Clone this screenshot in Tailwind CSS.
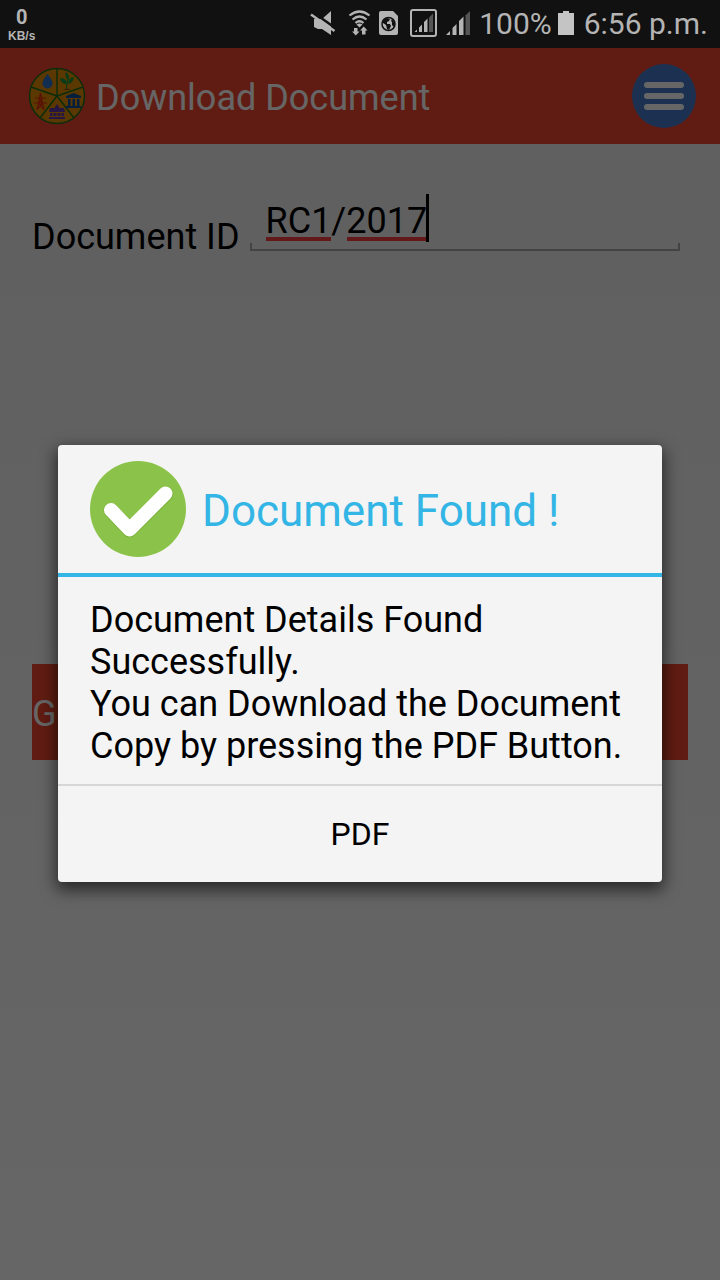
<!DOCTYPE html>
<html lang="en">
<head>
  <meta charset="UTF-8" />
  <meta name="viewport" content="width=device-width, initial-scale=1" />
  <title>Download Document</title>
  <script src="https://cdn.jsdelivr.net/npm/@tailwindcss/browser@4"></script>
</head>
<body class="min-h-screen flex flex-col font-['Roboto',sans-serif] bg-white">

  <!-- Status bar -->
  <div class="h-12 shrink-0 bg-[#111111] text-[#b4b4b4] flex items-center justify-between pl-2 pr-3">
    <div class="flex flex-col items-center font-['Liberation_Sans',sans-serif]">
      <span class="text-xl leading-6 font-['Roboto',sans-serif] font-bold">0</span>
      <span class="text-xs leading-3.5 font-bold">KB/s</span>
    </div>
    <div class="flex items-center">
      <svg class="w-[162px] h-12" viewBox="308 0 162 48" fill="#b4b4b4">
        <!-- muted speaker -->
        <path d="M313 19h8l9-8v24l-9-6h-4l-4-2z" />
        <path d="M311 11.500l24 17" stroke="#111111" stroke-width="2.500" />
        <path d="M310 14.500l23.500 16.500" stroke="#b4b4b4" stroke-width="2.500" />
        <!-- wifi -->
        <g fill="none" stroke="#b4b4b4" stroke-width="2.200">
          <path d="M348.500 15.500q10-8 20 0" />
          <path d="M351.500 19.500q7-6 14 0" />
          <path d="M354.500 23q4-3.500 8 0" />
        </g>
        <path d="M355.500 24.500q3-2 6 0l-3 3z" />
        <path d="M353 28h3.500v3.500h2l-3.700 4-3.800-4h2zM361 34.500h3.500v-4h2l-3.700-4-3.800 4h2z" />
        <!-- sim with globe -->
        <path d="M380 11h12l5 5v17q0 2-2 2h-15q-2 0-2-2v-20q0-2 2-2z" />
        <circle cx="387.500" cy="24" r="6.500" fill="none" stroke="#111111" stroke-width="1.500" />
        <path d="M382 20l4-2 3 1-1 2-2 1v2h3l1 2-2 4-2-1-1-4-3-2zM391 19l3 4-1 4-2-2v-3l-1-1z" fill="#111111" />
        <!-- boxed signal -->
        <rect x="410" y="10" width="25" height="26" rx="2" fill="none" stroke="#b4b4b4" stroke-width="2" />
        <path d="M413.500 32l2.500-2.500v2.500zM418 27.500l3-3v7.500h-3zM423 22l3.500-3.500v13.500h-3.500z" />
        <path d="M428 17.500l4-4v18.500h-4z" fill="#555555" />
        <!-- signal -->
        <path d="M445 35l4-4v4zM451.500 28l4-4v11h-4zM458 21l4.500-4.500v18.500h-4.500z" />
        <path d="M464.500 15.500l4.500-4.500v24h-4.500z" fill="#555555" />
      </svg>
      <span class="text-[30px] leading-8 ml-2">100%</span>
      <svg class="w-4 h-6 ml-1.5 -mt-0.5" viewBox="0 0 16 24" fill="#c4c4c4">
        <path d="M5 0h6v2h5v22H0V2h5z" />
      </svg>
      <span class="text-[30px] leading-8 ml-2.5">6:56 p.m.</span>
    </div>
  </div>

  <div class="relative grow flex flex-col bg-linear-to-b from-[#eeeeee] to-white">

    <!-- App bar -->
    <header class="h-24 bg-[#f0482d] flex items-center px-6">
      <svg class="w-16 h-16 shrink-0" viewBox="24 64 64 64">
        <circle cx="57" cy="96" r="27.500" fill="#e08c00" stroke="#1f6f1f" stroke-width="1.500" />
        <path d="M57 96V68.500M57 96l26-9M57 96l17 22M57 96l-17 22M57 96l-26-9" stroke="#1f6f1f" stroke-width="1.500" />
        <path d="M47.500 74q-5 6-5 9.500a5 5 0 0 0 10 0q0-3.500-5-9.500z" fill="#2b72c8" />
        <path d="M66.500 89q0-6 1.500-10" fill="none" stroke="#16933c" stroke-width="1.200" />
        <path d="M60 78q7 0 7 6-6 0-7-6zM66 72q5 4 2 8-4-4-2-8zM74 77q-1 6-6 7 0-6 6-7z" fill="#16933c" />
        <path d="M63 90q4-3 8 0z" fill="#8a4a20" />
        <path d="M40.500 93l-3.500 17M40.500 93l3.500 17M35 98h11M34 103h13M38.500 103l5 6M42.500 103l-5 6M39 98l3.500 5M42 98l-3.500 5" fill="none" stroke="#e02810" stroke-width="1.200" />
        <g fill="#0f4f96">
          <path d="M66 96l7.500-3 7.500 3v2H66zM68 99h2.500v7H68zM72.500 99h2.500v7h-2.500zM77 99h2.500v7H77zM66 106h15v2H66z" />
        </g>
        <g fill="#6038a8">
          <path d="M55 107l2-3 2 3v1h5l1 4H49l1-4h5zM50 113h14v3H50zM49 117h16v2H49z" />
          <path d="M53 113v3M57 113v3M61 113v3" stroke="#e08c00" />
        </g>
      </svg>
      <h1 class="grow pl-2 pt-1 text-4xl text-white">Download Document</h1>
      <button type="button" aria-label="Menu" class="w-16 h-16 rounded-full bg-[#467acd] flex flex-col items-center justify-center gap-[5px]">
        <span class="w-10 h-1.5 rounded-full bg-white"></span>
        <span class="w-10 h-1.5 rounded-full bg-white"></span>
        <span class="w-10 h-1.5 rounded-full bg-white"></span>
      </button>
    </header>

    <main class="px-8 pt-12">
      <div class="flex items-start pr-2">
        <label for="doc-id" class="pt-6 text-4xl text-black leading-[42px] whitespace-nowrap">Document ID</label>
        <div class="relative grow ml-2.5 h-[59px]">
          <input id="doc-id" type="text" value="RC1/2017" class="w-full h-[58px] px-4 text-4xl text-black outline-none bg-transparent" />
          <!-- spelling marks and caret -->
          <span class="absolute left-4 top-[45px] w-[65px] h-1 bg-[#f84040]"></span>
          <span class="absolute left-[97px] top-[45px] w-20 h-1 bg-[#f84040]"></span>
          <span class="absolute left-44 top-0.5 w-[3px] h-12 bg-black"></span>
          <span class="absolute inset-x-0 bottom-0 h-2 border-2 border-t-0 border-[#a8a8a8]"></span>
        </div>
      </div>
      <button type="button" class="mt-[406px] w-full h-24 pt-1 bg-[#f0482d] text-4xl text-white text-left">G</button>
    </main>

    <!-- Dialog -->
    <div class="absolute inset-0 bg-black/60"></div>
    <div class="absolute inset-0 flex items-center justify-center px-[58px] pb-px">
      <div role="dialog" aria-labelledby="dialog-title" class="w-full rounded-sm bg-[#f4f4f4] shadow-[0_6px_16px_2px_rgba(0,0,0,0.6)] overflow-hidden">
        <div class="h-33 border-b-4 border-[#33b5e5] flex items-center px-8 gap-4">
          <svg class="w-24 h-24 shrink-0" viewBox="0 0 96 96">
            <circle cx="48" cy="48" r="48" fill="#8bc34a" />
            <path d="M21 49.500l18.500 19.500L76 33" fill="none" stroke="#7cb33c" stroke-width="15" stroke-linecap="round" stroke-linejoin="round" />
            <path d="M21 49l18.500 19.500L75.500 32.500" fill="none" stroke="#ffffff" stroke-width="14" stroke-linecap="round" stroke-linejoin="round" />
          </svg>
          <h2 id="dialog-title" class="pt-1 text-[44px] text-[#33b5e5] whitespace-nowrap">Document Found !</h2>
        </div>
        <p class="px-8 pt-[22px] pb-[17px] text-4xl leading-[42px] text-black">Document Details Found Successfully.<br />You can Download the Document Copy by pressing the PDF Button.</p>
        <button type="button" class="w-full h-[98px] border-t-2 border-[#d6d6d6] text-[32px] text-black">PDF</button>
      </div>
    </div>
  </div>

</body>
</html>
